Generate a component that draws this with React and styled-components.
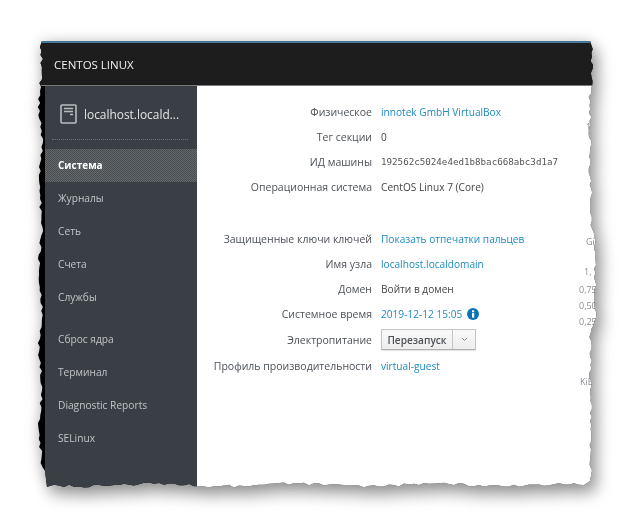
import React from "react";
import styled, { createGlobalStyle } from "styled-components";

const GlobalStyle = createGlobalStyle`
    html, body {
        margin: 0;
        background: #ffffff;
        font-family: "Open Sans", "Liberation Sans", sans-serif;
    }
`;

const Page = styled.div`
    width: 629px;
    height: 524px;
    padding: 41px 0 0 38px;
    box-sizing: border-box;
    overflow: hidden;
`;

const Shadow = styled.div`
    width: 560px;
    height: 447px;
    filter: drop-shadow(5px 8px 8px rgba(0, 0, 0, 0.36)) drop-shadow(0 0 7px rgba(0, 0, 0, 0.16));
`;

const Window = styled.div`
    width: 100%;
    height: 100%;
    display: flex;
    flex-direction: column;
    background: #000000;
`;

const TopBar = styled.header`
    height: 45px;
    box-sizing: border-box;
    flex: none;
    display: flex;
    align-items: center;
    padding-left: 16px;
    background: #1d1d1d;
    border-top: 2px solid #45799b;
    border-bottom: 1px solid #77797a;
    color: #f0f0f0;
    font-size: 11.5px;
`;

const Body = styled.div`
    flex: 1;
    min-height: 0;
    display: flex;
    padding-left: 7px;
`;

const Sidebar = styled.nav`
    width: 152px;
    flex: none;
    display: flex;
    flex-direction: column;
    background: #393f44;
`;

const HostRow = styled.div`
    height: 51px;
    margin: 0 9px 0 7px;
    padding: 2px 0 0 8px;
    display: flex;
    align-items: center;
    gap: 7px;
    border-bottom: 1px dotted #6d7276;
    color: #e4e5e6;
    font-size: 11.9px;
    white-space: nowrap;
`;

const NavItem = styled.div`
    height: 33px;
    box-sizing: border-box;
    padding: 0 0 2px 13px;
    display: flex;
    align-items: center;
    color: ${(p) => (p.$active ? "#ffffff" : "#c2c4c6")};
    font-size: ${(p) => (p.$active ? 10 : 10.2)}px;
    font-weight: ${(p) => (p.$active ? 700 : 400)};
    ${(p) =>
        p.$active &&
        `
        background-color: #55595d;
        background-image: repeating-conic-gradient(#64686b 0 25%, #484d51 0 50%);
        background-size: 2px 2px;
    `}
`;

const NavGroup = styled.div`
    margin-top: ${(p) => p.$gap || 0}px;
`;

const Content = styled.main`
    flex: 1;
    position: relative;
    background: #ffffff;
    padding-top: 13px;
    overflow: hidden;
`;

const Details = styled.div`
    display: grid;
    grid-template-columns: 175px auto;
    column-gap: 9px;
    justify-content: start;
    font-size: 10.5px;
`;

const Label = styled.div`
    min-height: 25px;
    display: flex;
    align-items: center;
    justify-content: flex-end;
    white-space: nowrap;
    color: #4d5258;
`;

const Value = styled.div`
    min-height: 25px;
    display: flex;
    align-items: center;
    gap: 5px;
    white-space: nowrap;
    font-size: 10.15px;
    color: #444444;
`;

const Link = styled.span`
    color: #1f8ac0;
`;

const MachineId = styled.span`
    font-family: "DejaVu Sans Mono", monospace;
    font-size: 9.2px;
    color: #555555;
`;

const Spacer = styled.div`
    grid-column: 1 / -1;
    height: 27px;
`;

const ButtonGroup = styled.div`
    display: flex;
    height: 21px;
    margin: 3px 0;
    box-sizing: border-box;
    border: 1px solid #c4c4c4;
    border-bottom-color: #b0b0b0;
    border-radius: 1px;
    background: linear-gradient(#fafafa, #ededed);
    box-shadow: 0 1px 1px rgba(0, 0, 0, 0.12);
    color: #4d5258;
    font-weight: 600;
`;

const ButtonPart = styled.div`
    display: flex;
    align-items: center;
    justify-content: center;
    width: ${(p) => p.$width}px;
    border-left: ${(p) => (p.$split ? "1px solid #c4c4c4" : "none")};
`;

const Axis = styled.div`
    position: absolute;
    top: 0;
    left: 382px;
    display: flex;
    flex-direction: column;
    color: #8b8f94;
    font-size: 9px;
    line-height: 12px;
`;

const Tick = styled.div`
    margin-top: ${(p) => p.$top}px;
    margin-left: ${(p) => p.$left || 0}px;
`;

// deterministic noise so the torn edge looks the same on every load
const makeNoise = (seed) => {
    let s = seed;
    return () => {
        s = (s * 16807) % 2147483647;
        return (s % 1000) / 1000 - 0.5;
    };
};

// right edge of the tear, in window coordinates, follows the bulges of the screenshot
const rightEdge = (y) => {
    if (y < 45) return 554;
    if (y < 150) return 552;
    if (y < 190) return 553.5;
    if (y < 287) return 557;
    return 552.5;
};

const tornPath = () => {
    const w = 560;
    const h = 447;
    const noise = makeNoise(4211);
    const pts = [];
    pts.push([4, 0], [rightEdge(0) - 2, 0]);
    for (let y = 4; y < h - 16; y += 4) {
        pts.push([rightEdge(y) + 3 * noise(), y]);
    }
    pts.push([w - 6, h - 18], [w - 8, h - 7], [w - 14, h - 3]);
    for (let x = w - 19; x > 10; x -= 5) {
        pts.push([x, h - 3 + 3 * noise() + 1.2 * Math.sin(x / 23)]);
    }
    pts.push([9, h - 1], [7, h - 17]);
    for (let y = h - 21; y > 3; y -= 4) {
        pts.push([2.5 + 3 * noise() + 1.5 * Math.sin(y / 13), y]);
    }
    return `polygon(${pts.map(([x, y]) => `${x.toFixed(1)}px ${y.toFixed(1)}px`).join(",")})`;
};

const HostIcon = () => (
    <svg width="17" height="20" viewBox="0 0 17 20" fill="none" stroke="#b9bcbe">
        <rect x="1" y="1" width="15" height="18" rx="1" strokeWidth="1.6" />
        <path d="M4 4.5h9M4 7.5h9M10 10.5h3" strokeWidth="1.4" />
    </svg>
);

const Chevron = () => (
    <svg width="7" height="5" viewBox="0 0 7 5" fill="none" stroke="#8a8e92">
        <path d="M1 1l2.5 2.5L6 1" />
    </svg>
);

const InfoIcon = () => (
    <svg width="12" height="12" viewBox="0 0 12 12">
        <circle cx="6" cy="6" r="6" fill="#0a74b6" />
        <rect x="5" y="5" width="2.2" height="4.6" fill="#ffffff" />
        <rect x="5" y="2.3" width="2.2" height="1.9" fill="#ffffff" />
    </svg>
);

const primaryNav = ["Журналы", "Сеть", "Счета", "Службы"];
const toolsNav = ["Сброс ядра", "Терминал", "Diagnostic Reports", "SELinux"];

export default function App() {
    return (
        <Page>
            <GlobalStyle />
            <Shadow>
                <Window style={{ clipPath: tornPath() }}>
                    <TopBar>CENTOS LINUX</TopBar>
                    <Body>
                        <Sidebar>
                            <HostRow>
                                <HostIcon />
                                localhost.locald...
                            </HostRow>
                            <NavGroup $gap={9}>
                                <NavItem $active>Система</NavItem>
                                {primaryNav.map((item) => (
                                    <NavItem key={item}>{item}</NavItem>
                                ))}
                            </NavGroup>
                            <NavGroup $gap={9}>
                                {toolsNav.map((item) => (
                                    <NavItem key={item}>{item}</NavItem>
                                ))}
                            </NavGroup>
                        </Sidebar>
                        <Content>
                            <Details>
                                <Label>Физическое</Label>
                                <Value><Link>innotek GmbH VirtualBox</Link></Value>
                                <Label>Тег секции</Label>
                                <Value>0</Value>
                                <Label>ИД машины</Label>
                                <Value><MachineId>192562c5024e4ed1b8bac668abc3d1a7</MachineId></Value>
                                <Label>Операционная система</Label>
                                <Value>CentOS Linux 7 (Core)</Value>
                                <Spacer />
                                <Label>Защищенные ключи ключей</Label>
                                <Value><Link>Показать отпечатки пальцев</Link></Value>
                                <Label>Имя узла</Label>
                                <Value><Link>localhost.localdomain</Link></Value>
                                <Label>Домен</Label>
                                <Value>Войти в домен</Value>
                                <Label>Системное время</Label>
                                <Value><Link>2019-12-12 15:05</Link><InfoIcon /></Value>
                                <Label>Электропитание</Label>
                                <Value>
                                    <ButtonGroup>
                                        <ButtonPart $width={70}>Перезапуск</ButtonPart>
                                        <ButtonPart $width={22} $split><Chevron /></ButtonPart>
                                    </ButtonGroup>
                                </Value>
                                <Label>Профиль производительности</Label>
                                <Value><Link>virtual-guest</Link></Value>
                            </Details>
                            <Axis>
                                <Tick $top={35} $left={7}>1</Tick>
                                <Tick $top={103} $left={7}>GiB</Tick>
                                <Tick $top={18} $left={5}>1,</Tick>
                                <Tick $top={6}>0,75</Tick>
                                <Tick $top={4}>0,50</Tick>
                                <Tick $top={4}>0,25</Tick>
                                <Tick $top={48} $left={1}>KiB</Tick>
                            </Axis>
                        </Content>
                    </Body>
                </Window>
            </Shadow>
        </Page>
    );
}
